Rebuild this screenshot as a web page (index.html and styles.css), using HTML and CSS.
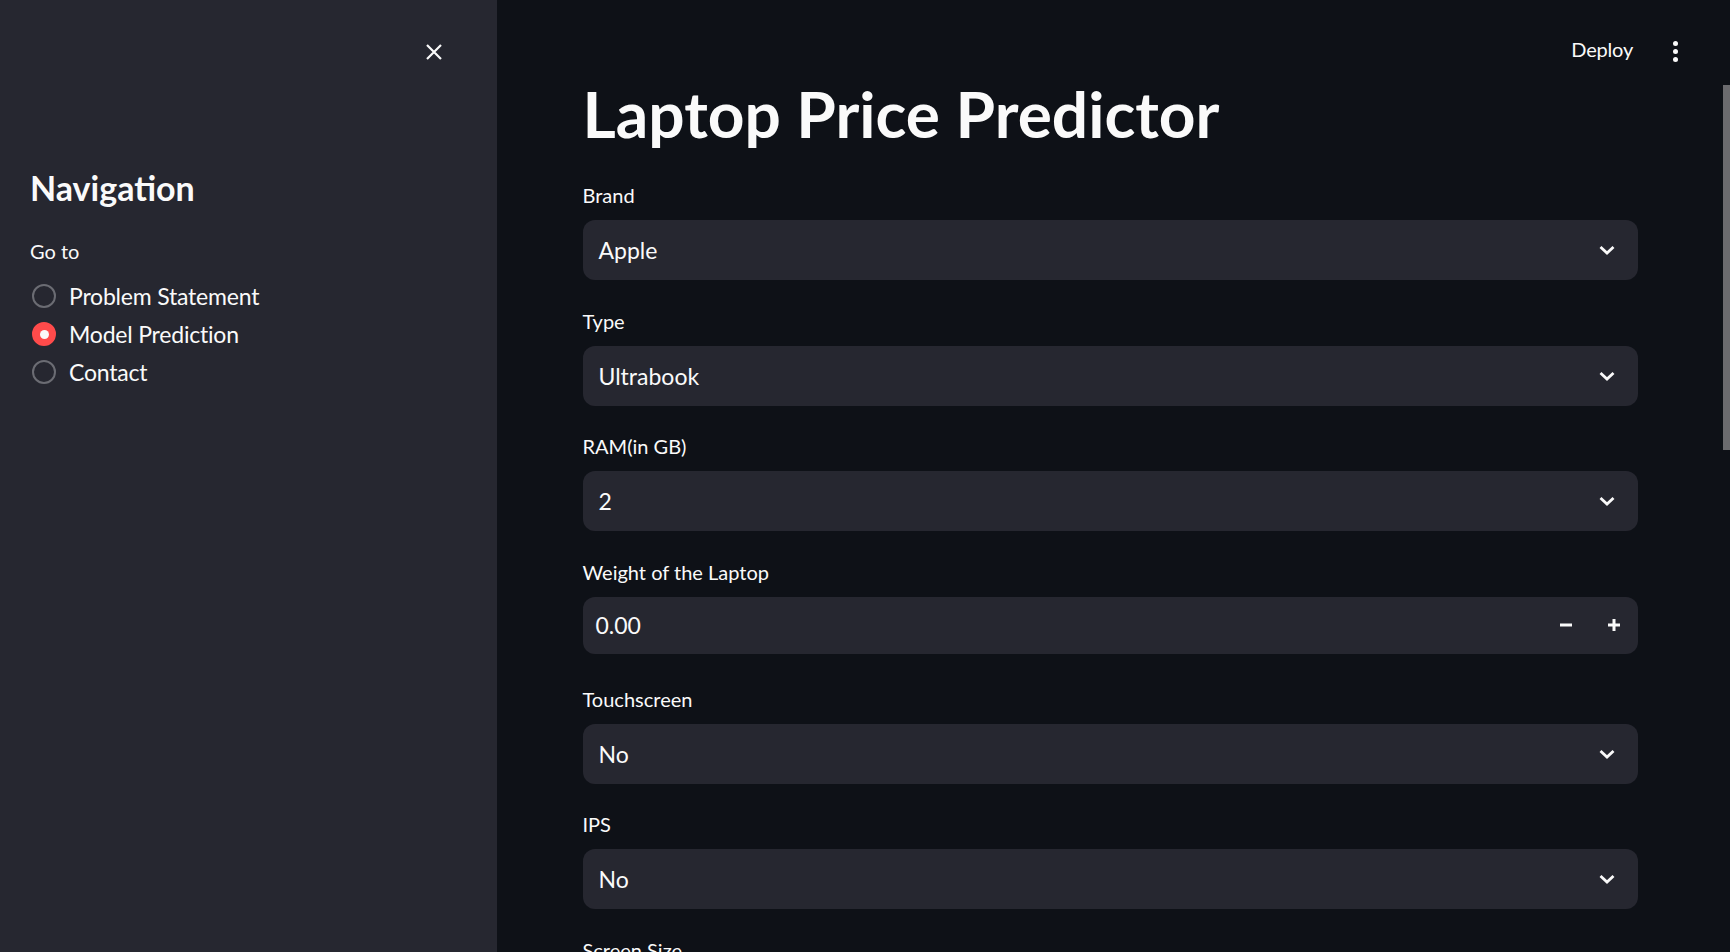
FILE: index.html
```html
<!DOCTYPE html>
<html lang="en">
<head>
<meta charset="utf-8">
<title>Laptop Price Predictor</title>
<link rel="stylesheet" href="styles.css">
</head>
<body>
<div class="app">
  <aside class="sidebar">
    <div class="sidebar-top">
      <button class="close-btn" aria-label="Close sidebar">
        <svg width="18" height="18" viewBox="0 0 18 18"><path d="M2 2 L16 16 M16 2 L2 16" stroke="#fafafa" stroke-width="2.2" stroke-linecap="butt" fill="none"/></svg>
      </button>
    </div>
    <div class="sidebar-content">
      <h2 class="side-title">Navigation</h2>
      <div class="field-label side-label">Go to</div>
      <div class="radio-group">
        <div class="radio-row"><span class="radio"></span><span class="radio-text">Problem Statement</span></div>
        <div class="radio-row"><span class="radio selected"></span><span class="radio-text">Model Prediction</span></div>
        <div class="radio-row"><span class="radio"></span><span class="radio-text">Contact</span></div>
      </div>
    </div>
  </aside>
  <main class="main">
    <header class="topbar">
      <span class="deploy">Deploy</span>
      <span class="kebab"><i></i><i></i><i></i></span>
    </header>
    <div class="block">
      <h1 class="title">Laptop Price Predictor</h1>

      <div class="field">
        <div class="field-label">Brand</div>
        <div class="select"><span>Apple</span><svg class="chev" width="18" height="12" viewBox="0 0 18 12"><path d="M2.5 3 L9 9 L15.5 3" stroke="#fafafa" stroke-width="2.8" fill="none"/></svg></div>
      </div>

      <div class="field">
        <div class="field-label">Type</div>
        <div class="select"><span>Ultrabook</span><svg class="chev" width="18" height="12" viewBox="0 0 18 12"><path d="M2.5 3 L9 9 L15.5 3" stroke="#fafafa" stroke-width="2.8" fill="none"/></svg></div>
      </div>

      <div class="field">
        <div class="field-label">RAM(in GB)</div>
        <div class="select"><span>2</span><svg class="chev" width="18" height="12" viewBox="0 0 18 12"><path d="M2.5 3 L9 9 L15.5 3" stroke="#fafafa" stroke-width="2.8" fill="none"/></svg></div>
      </div>

      <div class="field">
        <div class="field-label">Weight of the Laptop</div>
        <div class="number">
          <span class="num-value">0.00</span>
          <span class="step minus"><svg width="14" height="14" viewBox="0 0 14 14"><path d="M1 7 H13" stroke="#fafafa" stroke-width="3"/></svg></span>
          <span class="step plus"><svg width="14" height="14" viewBox="0 0 14 14"><path d="M1 7 H13 M7 1 V13" stroke="#fafafa" stroke-width="3"/></svg></span>
        </div>
      </div>

      <div class="field">
        <div class="field-label">Touchscreen</div>
        <div class="select"><span>No</span><svg class="chev" width="18" height="12" viewBox="0 0 18 12"><path d="M2.5 3 L9 9 L15.5 3" stroke="#fafafa" stroke-width="2.8" fill="none"/></svg></div>
      </div>

      <div class="field">
        <div class="field-label">IPS</div>
        <div class="select"><span>No</span><svg class="chev" width="18" height="12" viewBox="0 0 18 12"><path d="M2.5 3 L9 9 L15.5 3" stroke="#fafafa" stroke-width="2.8" fill="none"/></svg></div>
      </div>

      <div class="field">
        <div class="field-label">Screen Size</div>
        <div class="select"><span>13.3</span></div>
      </div>
    </div>
    <div class="scroll-thumb"></div>
  </main>
</div>
</body>
</html>
```

FILE: styles.css
```css
* { box-sizing: border-box; }
html, body {
  margin: 0;
  padding: 0;
  height: 952px;
  overflow: hidden;
  background: #0e1117;
  color: #fafafa;
  font-family: "Lato", "Noto Sans", sans-serif;
}
.app {
  display: flex;
  height: 952px;
}
.sidebar {
  width: 497px;
  flex: none;
  background: #262730;
  height: 100%;
}
.sidebar-top {
  height: 166px;
  display: flex;
  justify-content: flex-end;
  align-items: flex-start;
  padding: 36px 47px 0 0;
}
.close-btn {
  width: 32px;
  height: 32px;
  border: 0;
  background: transparent;
  padding: 0;
  display: flex;
  align-items: center;
  justify-content: center;
}
.sidebar-content {
  padding: 0 30px;
}
.side-title {
  margin: 0;
  font-size: 34px;
  line-height: 43px;
  font-weight: 700;
}
.field-label {
  font-size: 20px;
  line-height: 34px;
  height: 36px;
  margin-bottom: 6px;
}
.side-label {
  margin-top: 25px;
  margin-bottom: 7px;
}
.radio-group {
  display: flex;
  flex-direction: column;
}
.radio-row {
  height: 38px;
  display: flex;
  align-items: center;
  padding-left: 2px;
}
.radio {
  width: 24px;
  height: 24px;
  border-radius: 50%;
  border: 2px solid #6b6c73;
  margin-right: 13px;
  flex: none;
  display: flex;
  align-items: center;
  justify-content: center;
}
.radio.selected {
  background: #ff4b4b;
  border-color: #ff4b4b;
}
.radio.selected::after {
  content: "";
  width: 9px;
  height: 9px;
  border-radius: 50%;
  background: #fafafa;
}
.radio-text {
  font-size: 23px;
  letter-spacing: -0.2px;
}
.main {
  flex: 1;
  position: relative;
  padding-right: 7px;
  height: 100%;
  overflow: hidden;
}
.topbar {
  position: absolute;
  top: 0;
  right: 0;
  height: 100px;
  display: flex;
  align-items: flex-start;
  padding: 31px 52px 0 0;
  gap: 40px;
}
.deploy {
  font-size: 20px;
  line-height: 36px;
  letter-spacing: -0.2px;
}
.kebab {
  display: flex;
  flex-direction: column;
  gap: 3px;
  padding-top: 10px;
}
.kebab i {
  width: 5px;
  height: 5px;
  border-radius: 50%;
  background: #fafafa;
}
.block {
  width: 1055px;
  margin: 0 auto;
  padding-top: 74px;
}
.title {
  margin: 0 0 25px 0;
  font-size: 64px;
  line-height: 79px;
  font-weight: 700;
  letter-spacing: 0;
}
.field {
  display: flex;
  flex-direction: column;
  margin-bottom: 23.6px;
}
.select, .number {
  height: 60px;
  background: #262730;
  border-radius: 12px;
  display: flex;
  align-items: center;
  font-size: 23px;
}
.select {
  padding: 0 22px 0 16px;
  justify-content: space-between;
}
.chev { display: block; }
.number {
  height: 57px;
  padding: 0 0 0 13px;
  margin-bottom: 4.5px;
}
.num-value { flex: 1; }
.step {
  width: 48px;
  display: flex;
  justify-content: center;
}
.scroll-thumb {
  position: absolute;
  right: 0;
  top: 85px;
  width: 7px;
  height: 365px;
  background: #6b6b6e;
}
```
